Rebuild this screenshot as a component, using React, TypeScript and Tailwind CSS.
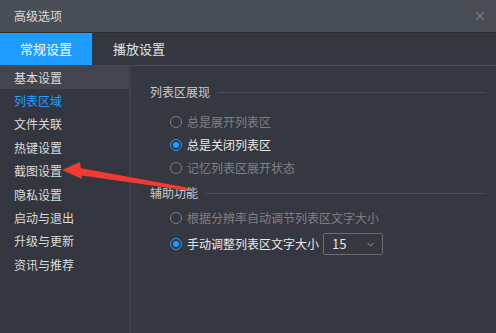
import { ChevronDown, X } from 'lucide-react';

const menu = ['基本设置', '列表区域', '文件关联', '热键设置', '截图设置', '隐私设置', '启动与退出', '升级与更新', '资讯与推荐'];

function Radio({ label, checked, disabled }: { label: string; checked?: boolean; disabled?: boolean }) {
  return (
    <div className="flex items-center gap-[5px]">
      <span
        className={`flex h-[12px] w-[12px] items-center justify-center rounded-full border ${
          checked ? 'border-[#1e9cff]' : 'border-[#7a7d84]'
        }`}
      >
        {checked && <span className="h-[6px] w-[6px] rounded-full bg-[#1e9cff]" />}
      </span>
      <span className={disabled ? 'text-[#7d8087]' : 'text-[#e8e8e8]'}>{label}</span>
    </div>
  );
}

function SectionHeader({ title }: { title: string }) {
  return (
    <div className="flex items-center pr-[11px] text-[#cacaca]">
      <span>{title}</span>
      <span className="ml-[8px] h-px flex-1 bg-[#4a4d55]" />
    </div>
  );
}

export default function App() {
  return (
    <div
      className="relative flex h-[333px] w-[496px] flex-col overflow-hidden bg-[#353840] text-[12px]"
      style={{ fontFamily: '"Noto Sans CJK SC", "Noto Sans", sans-serif' }}
    >
      <div className="flex h-[32px] items-center justify-between bg-[#4a4e57] pl-[14px] pr-[9px] text-[#d8d8d8]">
        <span>高级选项</span>
        <X className="h-[14px] w-[14px] text-[#9a9ca1]" strokeWidth={1.5} />
      </div>
      <div className="h-px bg-[#2c2e33]" />
      <div className="flex h-[32px] bg-[#343740] text-[13px]">
        <div className="flex w-[92px] items-center justify-center bg-[#1e9cff] text-white">常规设置</div>
        <div className="flex w-[94px] items-center justify-center text-[#e2e2e2]">播放设置</div>
      </div>
      <div className="h-px bg-[#464a52]" />
      <div className="flex flex-1">
        <div className="w-[129px] bg-[#33363e]">
          {menu.map((item, i) => (
            <div
              key={item}
              className={`flex h-[23.4px] items-center pl-[14px] ${i === 0 ? 'bg-[#42454d]' : ''} ${
                i === 1 ? 'text-[#1e9cff]' : 'text-[#dcdcdc]'
              }`}
            >
              {item}
            </div>
          ))}
        </div>
        <div className="w-[2px] bg-[#3e4149]" />
        <div className="flex-1 pl-[19px] pt-[17px]">
          <SectionHeader title="列表区展现" />
          <div className="mt-[12px] flex flex-col gap-[5px] pl-[20px] leading-[18px]">
            <Radio label="总是展开列表区" disabled />
            <Radio label="总是关闭列表区" checked />
            <Radio label="记忆列表区展开状态" disabled />
          </div>
          <div className="mt-[7px]">
            <SectionHeader title="辅助功能" />
          </div>
          <div className="mt-[7px] flex flex-col gap-[6px] pl-[20px] leading-[18px]">
            <Radio label="根据分辨率自动调节列表区文字大小" disabled />
            <div className="flex items-center gap-[4px]">
              <Radio label="手动调整列表区文字大小" checked />
              <div className="flex h-[22px] w-[60px] items-center justify-between rounded-[2px] border border-[#6a6d74] pl-[8px] pr-[6px] text-[13px] text-[#e4e4e4]">
                <span>15</span>
                <ChevronDown className="h-[11px] w-[11px] text-[#a0a2a7]" strokeWidth={2} />
              </div>
            </div>
          </div>
        </div>
      </div>
      <svg className="pointer-events-none absolute left-0 top-0" width="496" height="333">
        <polygon points="187,187.5 187,190.5 78,175 80,168" fill="#f03a32" />
        <polygon points="62,170 80,162 82,179" fill="#f03a32" />
      </svg>
    </div>
  );
}
